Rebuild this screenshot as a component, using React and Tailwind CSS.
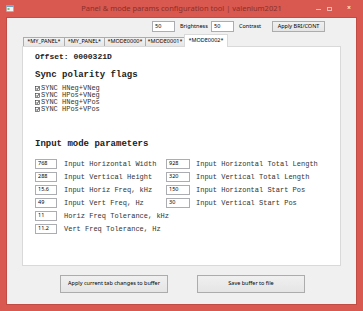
import React from "react";

const sans = { fontFamily: '"Noto Sans", "Open Sans", sans-serif' };
const mono = { fontFamily: '"Liberation Mono", "Courier New", monospace' };

function TextBox({ value, w }) {
  return (
    <div
      className={`${w} h-[10px] bg-white border border-[#abadb3] flex items-center pl-[2px] text-[5.5px] text-black leading-none`}
      style={sans}
    >
      {value}
    </div>
  );
}

function Check({ label }) {
  return (
    <div className="flex items-center h-[7px] gap-[1px]">
      <svg width="5" height="5" viewBox="0 0 5 5" className="shrink-0">
        <rect x="0.5" y="0.5" width="4" height="4" fill="white" stroke="#333" strokeWidth="0.6" />
        <path d="M1.2 2.5 L2.2 3.5 L3.9 1.2" fill="none" stroke="#111" strokeWidth="0.8" />
      </svg>
      <span className="text-[7px] leading-none text-[#333]" style={mono}>{label}</span>
    </div>
  );
}

function Row({ v1, l1, v2, l2 }) {
  return (
    <div className="flex items-center h-[10px]">
      <TextBox value={v1} w="w-[22px]" />
      <span className="ml-[7px] w-[102px] text-[7px] leading-none text-[#333] whitespace-nowrap" style={mono}>{l1}</span>
      {v2 !== undefined && (
        <>
          <TextBox value={v2} w="w-[24px]" />
          <span className="ml-[6px] text-[7px] leading-none text-[#333] whitespace-nowrap" style={mono}>{l2}</span>
        </>
      )}
    </div>
  );
}

function Tab({ label, w, selected }) {
  if (selected) {
    return (
      <div
        className={`${w} h-[13px] bg-white border border-b-0 border-[#d9d9d9] -mb-px relative z-10 flex items-center justify-center text-[5.5px] leading-none text-black`}
        style={sans}
      >
        {label}
      </div>
    );
  }
  return (
    <div
      className={`${w} h-[9px] bg-gradient-to-b from-[#f3f3f3] to-[#e6e6e6] border border-[#acacac] border-b-0 flex items-center justify-center text-[5.5px] leading-none text-black -mr-px`}
      style={sans}
    >
      {label}
    </div>
  );
}

function Button({ label, w }) {
  return (
    <div
      className={`${w} h-[18px] bg-gradient-to-b from-[#f0f0f0] to-[#e5e5e5] border border-[#acacac] flex items-center justify-center text-[5.5px] leading-none text-black`}
      style={sans}
    >
      {label}
    </div>
  );
}

export default function App() {
  return (
    <div className="w-[363px] h-[311px] bg-[#d9584f] flex flex-col overflow-hidden" style={sans}>
      {/* Title bar */}
      <div className="h-[17px] flex items-center relative shrink-0">
        <svg width="8" height="7" viewBox="0 0 8 7" className="ml-[6px]">
          <rect x="0.5" y="0.5" width="7" height="6" fill="#f4f4f4" stroke="#9aa" strokeWidth="0.5" />
          <rect x="0.5" y="0.5" width="7" height="1.5" fill="#6fa0d0" />
          <rect x="1.5" y="3" width="2" height="2" fill="#7cb87c" />
        </svg>
        <div className="absolute left-0 right-0 top-0 h-[17px] flex items-center justify-center text-[7.5px] text-[#8a302b] leading-none pointer-events-none">
          Panel &amp; mode params configuration tool | valenium2021
        </div>
        <div className="ml-auto flex items-center h-full">
          <div className="w-[11px] flex justify-center">
            <div className="w-[5px] h-px bg-[#f0b8b4] mt-[2px]" />
          </div>
          <div className="w-[11px] flex justify-center">
            <div className="w-[5px] h-[4px] border border-[#f0b8b4]" />
          </div>
          <div className="w-[28px] h-[14px] mb-[3px] flex items-center justify-center text-[#fbe3e1] text-[7px] leading-none font-bold">
            ×
          </div>
        </div>
      </div>

      {/* Client area */}
      <div className="mx-[6px] mb-[6px] flex-1 bg-[#f0f0f0] border border-[#c24b44] flex flex-col">
        {/* Top row */}
        <div className="flex items-center h-[11px] mt-[3px] ml-[145px] text-[5.5px] leading-none text-black">
          <TextBox value="50" w="w-[23px] h-[11px]" />
          <span className="ml-[5px] w-[31px]">Brightness</span>
          <TextBox value="50" w="w-[23px] h-[11px]" />
          <span className="ml-[5px] w-[33px]">Contrast</span>
          <div className="w-[53px] h-[11px] bg-gradient-to-b from-[#f0f0f0] to-[#e5e5e5] border border-[#acacac] flex items-center justify-center">
            Apply BRI/CONT
          </div>
        </div>

        {/* Tabs */}
        <div className="flex items-end ml-[16px] mt-[1px] h-[13px]">
          <Tab label="*MY_PANEL*" w="w-[42px]" />
          <Tab label="*MY_PANEL*" w="w-[41px]" />
          <Tab label="*MODE0000*" w="w-[42px]" />
          <Tab label="*MODE0001*" w="w-[40px]" />
          <Tab label="*MODE0002*" w="w-[44px]" selected />
        </div>

        {/* Panel */}
        <div className="ml-[15px] w-[319px] h-[220px] bg-white border border-[#d9d9d9] flex flex-col pl-[12px]">
          <div className="mt-[6px] text-[8px] font-bold leading-none text-[#222]" style={mono}>Offset: 0000321D</div>
          <div className="mt-[10px] text-[9px] font-bold leading-none text-[#222]" style={mono}>Sync polarity flags</div>
          <div className="mt-[5px] flex flex-col">
            <Check label="SYNC HNeg+VNeg" />
            <Check label="SYNC HPos+VNeg" />
            <Check label="SYNC HNeg+VPos" />
            <Check label="SYNC HPos+VPos" />
          </div>
          <div className="mt-[27px] text-[9px] font-bold leading-none text-[#222]" style={mono}>Input mode parameters</div>
          <div className="mt-[10px] flex flex-col gap-[3px]">
            <Row v1="768" l1="Input Horizontal Width" v2="928" l2="Input Horizontal Total Length" />
            <Row v1="288" l1="Input Vertical Height" v2="320" l2="Input Vertical Total Length" />
            <Row v1="15.6" l1="Input Horiz Freq, kHz" v2="150" l2="Input Horizontal Start Pos" />
            <Row v1="49" l1="Input Vert Freq, Hz" v2="30" l2="Input Vertical Start Pos" />
            <Row v1="11" l1="Horiz Freq Tolerance, kHz" />
            <Row v1="11.2" l1="Vert Freq Tolerance, Hz" />
          </div>
        </div>

        {/* Bottom buttons */}
        <div className="flex mt-[9px] ml-[53px] gap-[29px]">
          <Button label="Apply current tab changes to buffer" w="w-[108px]" />
          <Button label="Save buffer to file" w="w-[108px]" />
        </div>
      </div>
    </div>
  );
}
